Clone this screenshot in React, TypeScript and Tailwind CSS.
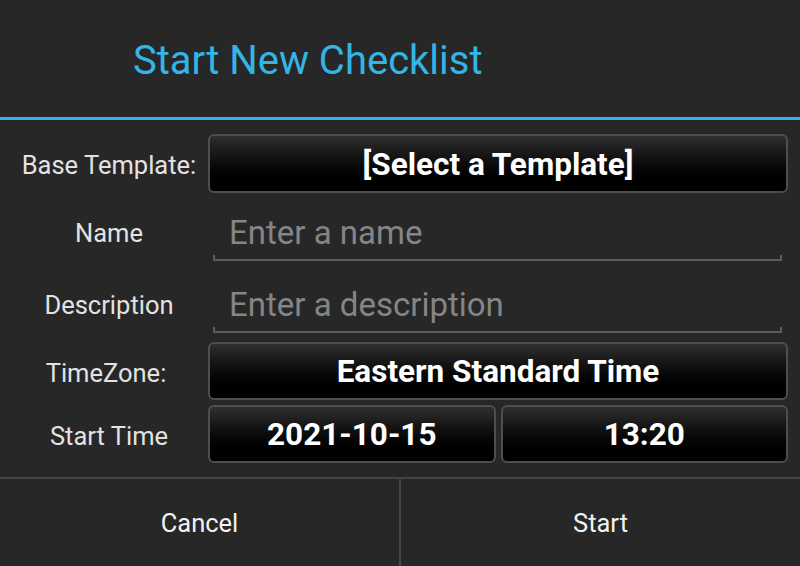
const font = { fontFamily: 'Roboto, "Noto Sans", sans-serif' };

function PickButton({ label, className = '' }: { label: string; className?: string }) {
  return (
    <button
      className={
        'flex h-full items-center justify-center rounded-[6px] border-2 border-[#4e4e4e] bg-linear-to-b from-[#2f2f2f] to-black pt-[2px] text-[31.5px] font-bold text-white ' +
        className
      }
    >
      {label}
    </button>
  );
}

function TextField({ placeholder }: { placeholder: string }) {
  return (
    <div className="ml-[5px] mr-[6px] flex h-full flex-1 flex-col">
      <div className="flex min-h-0 flex-1 items-center pt-[13px] pl-[16px]">
        <input
          className="w-full bg-transparent text-[33px] leading-[38px] text-white outline-none placeholder:text-[#858585]"
          placeholder={placeholder}
        />
      </div>
      <div className="mb-[8px] h-[6px] border-x-2 border-b-2 border-[#5c5c5c]" />
    </div>
  );
}

function Label({ text, className = 'pl-[10px]' }: { text: string; className?: string }) {
  return <div className={'w-[208px] text-center text-[25.5px] text-[#e2e2e2] ' + className}>{text}</div>;
}

export default function App() {
  return (
    <div className="flex h-[566px] w-[800px] flex-col bg-[#272727]" style={font}>
      {/* Title */}
      <div className="flex h-[117px] items-center pt-[5px] pl-[133px]">
        <h1 className="text-[40px] text-[#33b5e5]">Start New Checklist</h1>
      </div>
      <div className="h-[3px] bg-[#33b5e5]" />

      {/* Form */}
      <div className="flex flex-1 flex-col pt-[14px] pr-[12px]">
        <div className="flex h-[59px] items-center">
          <Label text="Base Template:" className="pl-[10px] pt-[4px]" />
          <PickButton label="[Select a Template]" className="flex-1" />
        </div>

        <div className="mt-[4px] flex h-[72px] items-center">
          <Label text="Name" />
          <TextField placeholder="Enter a name" />
        </div>

        <div className="flex h-[72px] items-center">
          <Label text="Description" />
          <TextField placeholder="Enter a description" />
        </div>

        <div className="mt-[1px] flex h-[58px] items-center">
          <Label text="TimeZone:" className="pl-[4px] pt-[4px]" />
          <PickButton label="Eastern Standard Time" className="flex-1" />
        </div>

        <div className="mt-[5px] flex h-[58px] items-center">
          <Label text="Start Time" className="pl-[10px] pt-[4px]" />
          <div className="flex h-full flex-1 gap-[5px]">
            <PickButton label="2021-10-15" className="flex-1" />
            <PickButton label="13:20" className="flex-1" />
          </div>
        </div>
      </div>

      {/* Actions */}
      <div className="h-[2px] bg-[#454545]" />
      <div className="flex h-[87px]">
        <button className="flex-1 pt-[2px] text-[25.5px] text-[#f2f2f2]">Cancel</button>
        <div className="w-[2px] bg-[#454545]" />
        <button className="flex-1 pt-[2px] text-[25.5px] text-[#f2f2f2]">Start</button>
      </div>
    </div>
  );
}
